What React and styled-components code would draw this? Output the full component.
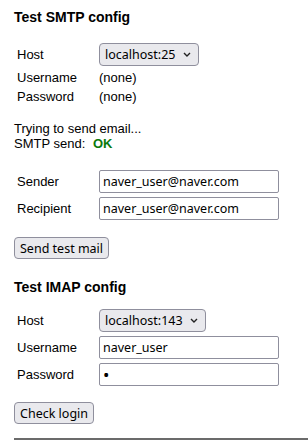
import React from 'react';
import styled, { createGlobalStyle } from 'styled-components';

const GlobalStyle = createGlobalStyle`
  body {
    margin: 0;
    background: #fff;
    color: #000;
    font-family: 'Liberation Sans', Arial, sans-serif;
    font-size: 13px;
  }
`;

const Page = styled.div`
  padding: 0 0 0 14px;
  overflow: hidden;
`;

const Heading = styled.h3`
  margin: ${(p) => p.$top}px 0 ${(p) => p.$bottom}px;
  font-size: 14px;
  line-height: 16px;
  font-weight: bold;
`;

const FormTable = styled.table`
  border-spacing: 2px;
  margin: ${(p) => p.$top || 0}px 0 0 0;
`;

const LabelCell = styled.td`
  width: 78px;
  padding: 1px;
  line-height: 15px;
  vertical-align: middle;
`;

const ValueCell = styled.td`
  padding: 1px;
  line-height: 15px;
  vertical-align: middle;
`;

const Status = styled.div`
  margin: 14px 0 0;
  line-height: 15px;
`;

const Ok = styled.b`
  color: #0b7a0b;
  margin-left: 4px;
`;

const controlFont = `
  font-family: 'Noto Sans', 'DejaVu Sans', sans-serif;
  font-size: 12.5px;
  color: #000;
`;

const SelectWrap = styled.span`
  display: inline-flex;
  align-items: center;
`;

const Select = styled.select`
  ${controlFont}
  appearance: none;
  height: 23px;
  box-sizing: border-box;
  padding: 0 22px 0 5px;
  border: 1px solid #8f8f9d;
  border-radius: 4px;
  background: #e9e9ed;
  margin: 0;
`;

const Chevron = styled.svg`
  width: 8px;
  height: 5px;
  margin-left: -16px;
  pointer-events: none;
`;

const TextInput = styled.input`
  ${controlFont}
  font-size: ${(p) => (p.type === 'password' ? '17px' : '12.5px')};
  width: 180px;
  height: 23px;
  box-sizing: border-box;
  padding: 0 3px;
  border: 1px solid #8f8f9d;
  border-radius: 2px;
  background: #fff;
  margin: 0;
  display: block;
`;

const Button = styled.button`
  ${controlFont}
  display: block;
  height: 22px;
  box-sizing: border-box;
  padding: 0 5px;
  border: 1px solid #8f8f9d;
  border-radius: 4px;
  background: #e9e9ed;
  margin: ${(p) => p.$top}px 0 0;
`;

const Rule = styled.hr`
  margin: 14px 0 0;
  border: 0;
  height: 2px;
  background: #6b6b6b;
`;

const HostSelect = ({ value }) => (
  <SelectWrap>
    <Select defaultValue={value}>
      <option value={value}>{value}</option>
    </Select>
    <Chevron viewBox="0 0 8 5">
      <polyline points="1,1 4,4 7,1" fill="none" stroke="#222" strokeWidth="1.4" />
    </Chevron>
  </SelectWrap>
);

const App = () => (
  <Page>
    <GlobalStyle />
    <Heading $top={9} $bottom={15}>Test SMTP config</Heading>
    <FormTable>
      <tbody>
        <tr>
          <LabelCell>Host</LabelCell>
          <ValueCell><HostSelect value="localhost:25" /></ValueCell>
        </tr>
        <tr>
          <LabelCell>Username</LabelCell>
          <ValueCell>(none)</ValueCell>
        </tr>
        <tr>
          <LabelCell>Password</LabelCell>
          <ValueCell>(none)</ValueCell>
        </tr>
      </tbody>
    </FormTable>
    <Status>
      Trying to send email...
      <br />
      SMTP send: <Ok>OK</Ok>
    </Status>
    <FormTable $top={16}>
      <tbody>
        <tr>
          <LabelCell>Sender</LabelCell>
          <ValueCell><TextInput defaultValue="naver_user@naver.com" /></ValueCell>
        </tr>
        <tr>
          <LabelCell>Recipient</LabelCell>
          <ValueCell><TextInput defaultValue="naver_user@naver.com" /></ValueCell>
        </tr>
      </tbody>
    </FormTable>
    <Button $top={14}>Send test mail</Button>
    <Heading $top={20} $bottom={11}>Test IMAP config</Heading>
    <FormTable>
      <tbody>
        <tr>
          <LabelCell>Host</LabelCell>
          <ValueCell><HostSelect value="localhost:143" /></ValueCell>
        </tr>
        <tr>
          <LabelCell>Username</LabelCell>
          <ValueCell><TextInput defaultValue="naver_user" /></ValueCell>
        </tr>
        <tr>
          <LabelCell>Password</LabelCell>
          <ValueCell><TextInput type="password" defaultValue="x" /></ValueCell>
        </tr>
      </tbody>
    </FormTable>
    <Button $top={13}>Check login</Button>
    <Rule />
  </Page>
);

export default App;
